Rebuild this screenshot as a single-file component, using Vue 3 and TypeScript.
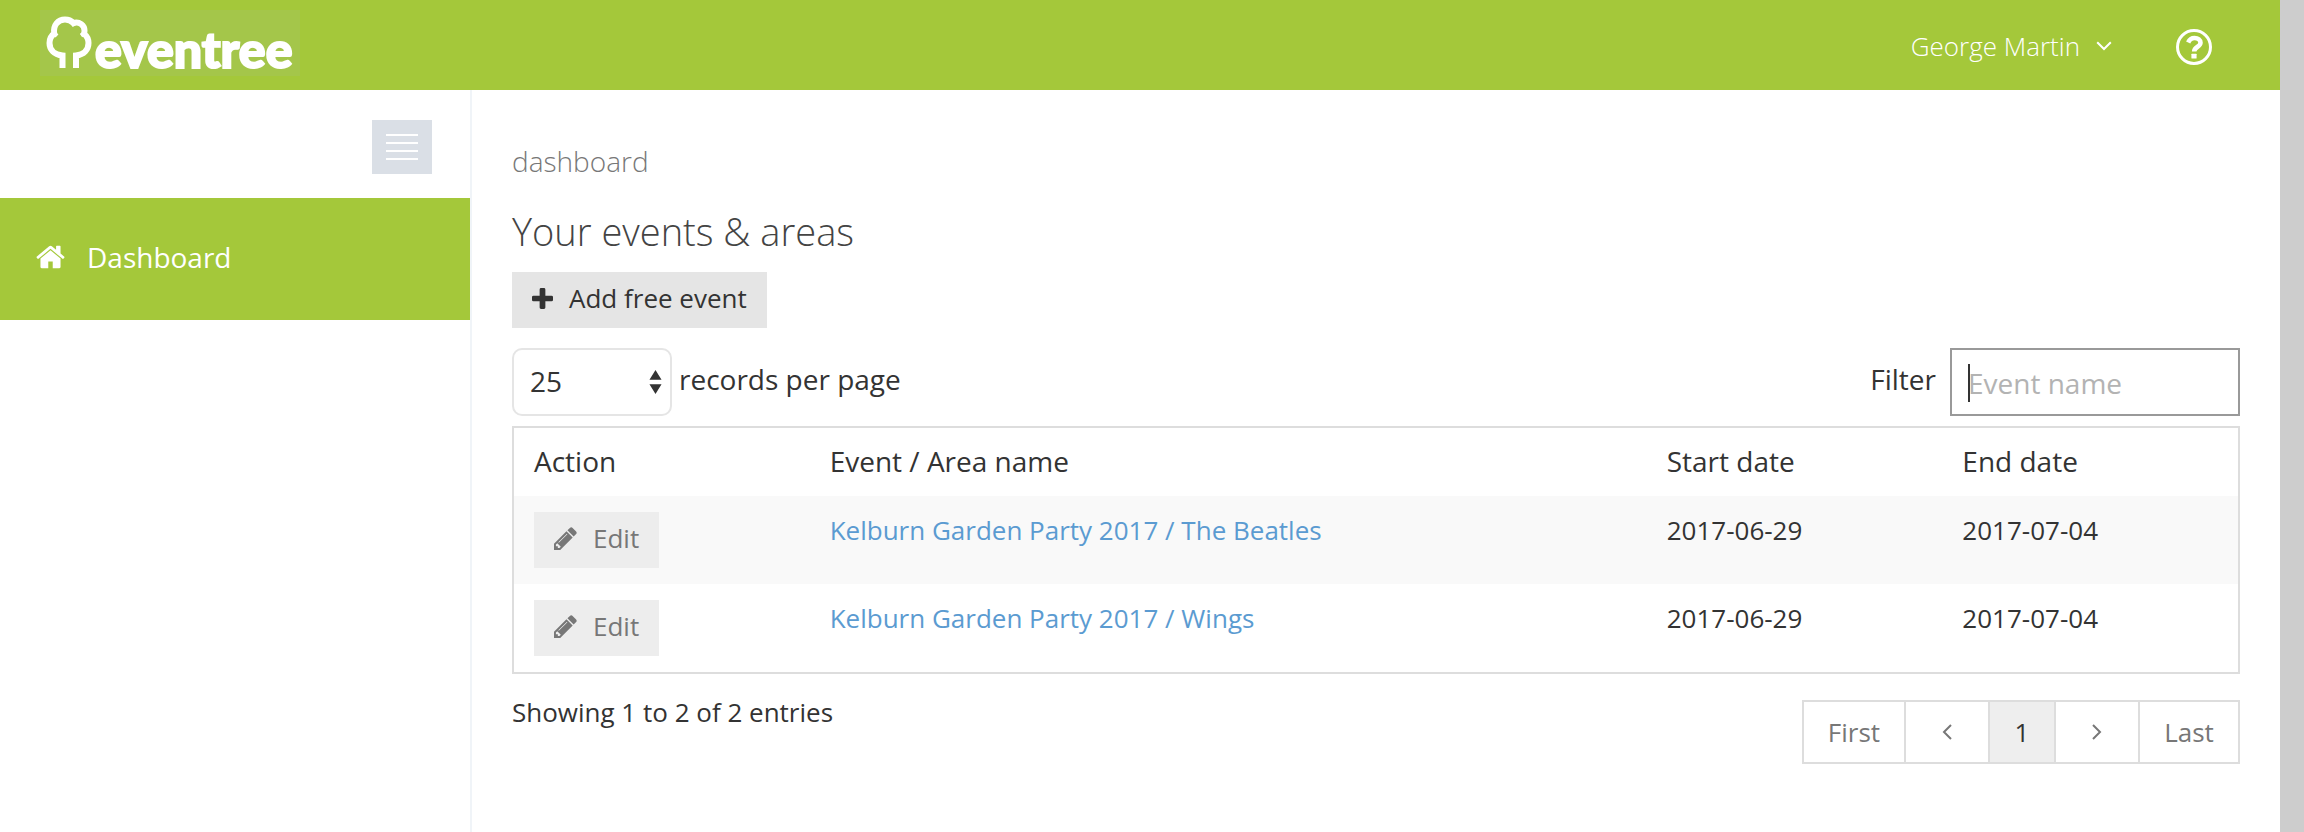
<script setup lang="ts">
import { ref, computed } from 'vue'

interface EventRow {
  name: string
  start: string
  end: string
}

const events: EventRow[] = [
  { name: 'Kelburn Garden Party 2017 / The Beatles', start: '2017-06-29', end: '2017-07-04' },
  { name: 'Kelburn Garden Party 2017 / Wings', start: '2017-06-29', end: '2017-07-04' },
]

const pageSize = ref('25')
const filter = ref('')

const visible = computed(() =>
  events.filter((e) => e.name.toLowerCase().includes(filter.value.toLowerCase())),
)
</script>

<template>
  <div class="shell">
    <div class="page">
      <header class="topbar">
        <a class="logo" href="#" aria-label="eventree">
          <svg class="tree" viewBox="0 0 48 54" aria-hidden="true">
            <path
              d="M17.500 53V40.500C8.500 39.500 4.500 34 4.500 28C4.500 23.500 6.500 20.500 9.200 18.500C8 10 13 4.500 20 4.500C24 4.500 26.500 6 28.300 8C34.500 6 39.500 10.500 39.500 15.500C39.500 17 39.300 18 39 18.800C42 21 43.500 24.500 43.500 28C43.500 34.500 39 39.500 31 40.500V53"
              fill="none"
              stroke="#fff"
              stroke-width="6"
            />
            <path d="M9 18l3 3M39 18.500l-3 2M28 8l1.500 3" stroke="#fff" stroke-width="4" />
          </svg>
          <span class="wordmark">eventree</span>
        </a>
        <div class="account">
          <button class="user" type="button">
            George Martin
            <svg class="caret" viewBox="0 0 16 10" aria-hidden="true">
              <path d="M1.200 1.200L8 8l6.800-6.800" fill="none" stroke="#fff" stroke-width="2" />
            </svg>
          </button>
          <button class="help" type="button" aria-label="Help">
            <svg viewBox="0 0 36 36" aria-hidden="true">
              <circle cx="18" cy="18" r="16.500" fill="none" stroke="#fff" stroke-width="3" />
              <path
                d="M12.200 13.500C13.500 10.500 15.500 9 18.500 9C22 9 24.500 11 24.500 13.800C24.500 18 18.300 17.500 18.200 22.500"
                fill="none"
                stroke="#fff"
                stroke-width="4.600"
              />
              <rect x="15.400" y="24.700" width="5.200" height="4.800" rx="0.600" fill="#fff" />
            </svg>
          </button>
        </div>
      </header>

      <div class="body">
        <nav class="sidebar">
          <div class="toggle-row">
            <button class="toggle" type="button" aria-label="Toggle sidebar">
              <span class="bar"></span><span class="bar"></span><span class="bar"></span><span class="bar"></span>
            </button>
          </div>
          <a class="nav-item" href="#">
            <svg class="home" viewBox="0 224 1664 1344" aria-hidden="true">
              <path
                fill="#fff"
                d="M1408 992v480q0 26-19 45t-45 19H960v-384H704v384H320q-26 0-45-19t-19-45V992q0-1 .5-3t.5-3l575-474 575 474q1 2 1 6zm223-69l-62 74q-8 9-21 11h-3q-13 0-21-7L832 424l-692 577q-12 8-24 7-13-2-21-11l-62-74q-8-10-7-23.500t11-21.500l719-599q32-26 76-26t76 26l244 204V288q0-14 9-23t23-9h192q14 0 23 9t9 23v408l219 182q10 8 11 21.500t-7 23.500z"
              />
            </svg>
            Dashboard
          </a>
        </nav>

        <main class="content">
          <div class="crumb">dashboard</div>
          <h1 class="title">Your events &amp; areas</h1>
          <button class="btn add" type="button">
            <svg class="plus" viewBox="0 0 22 22" aria-hidden="true">
              <path
                fill="#333"
                d="M9.500 0h3q1.500 0 1.500 1.500V8h6.500Q22 8 22 9.500v3q0 1.500-1.500 1.500H14v6.500q0 1.500-1.500 1.500h-3Q8 22 8 20.500V14H1.500Q0 14 0 12.500v-3Q0 8 1.500 8H8V1.500Q8 0 9.500 0z"
              />
            </svg>
            Add free event
          </button>

          <div class="toolbar">
            <div class="length">
              <div class="select-wrap">
                <select id="page-size" v-model="pageSize">
                  <option>10</option>
                  <option>25</option>
                  <option>50</option>
                </select>
                <svg class="arrows" viewBox="0 0 14 26" aria-hidden="true">
                  <path fill="#333" d="M7 0l6.500 10.500H.5zM7 26L.5 15.500h13z" />
                </svg>
              </div>
              <label class="label" for="page-size">records per page</label>
            </div>
            <div class="filter">
              <label class="label" for="filter">Filter</label>
              <div class="input-wrap">
                <input id="filter" v-model="filter" type="text" placeholder="Event name" />
                <span class="cursor" aria-hidden="true"></span>
              </div>
            </div>
          </div>

          <table class="grid">
            <colgroup>
              <col class="c-action" />
              <col />
              <col class="c-date" />
              <col class="c-date" />
            </colgroup>
            <thead>
              <tr>
                <th>Action</th>
                <th>Event / Area name</th>
                <th>Start date</th>
                <th>End date</th>
              </tr>
            </thead>
            <tbody>
              <tr v-for="row in visible" :key="row.name">
                <td>
                  <button class="btn edit" type="button">
                    <svg class="pencil" viewBox="128 128 1536 1536" aria-hidden="true">
                      <path
                        fill="#777"
                        d="M491 1536l91-91-235-235-91 91v107h128v128h107zm523-928q0-22-22-22-10 0-17 7l-542 542q-7 7-7 17 0 22 22 22 10 0 17-7l542-542q7-7 7-17zm-54-192l416 416-832 832H128v-416zm683 96q0 53-37 90l-166 166-416-416 166-165q36-38 90-38 53 0 91 38l235 234q37 39 37 91z"
                      />
                    </svg>
                    Edit
                  </button>
                </td>
                <td><a class="link" href="#">{{ row.name }}</a></td>
                <td>{{ row.start }}</td>
                <td>{{ row.end }}</td>
              </tr>
            </tbody>
          </table>

          <div class="footer">
            <div class="info">Showing 1 to {{ visible.length }} of {{ visible.length }} entries</div>
            <div class="pager">
              <button class="pg" type="button">First</button>
              <button class="pg arrow" type="button" aria-label="Previous page">
                <svg viewBox="0 0 10 16" aria-hidden="true">
                  <path d="M9 1L2 8l7 7" fill="none" stroke="#777" stroke-width="2" />
                </svg>
              </button>
              <button class="pg current" type="button" aria-current="page">1</button>
              <button class="pg arrow" type="button" aria-label="Next page">
                <svg viewBox="0 0 10 16" aria-hidden="true">
                  <path d="M1 1l7 7-7 7" fill="none" stroke="#777" stroke-width="2" />
                </svg>
              </button>
              <button class="pg" type="button">Last</button>
            </div>
          </div>
        </main>
      </div>
    </div>
    <div class="edge"></div>
  </div>
</template>

<style>
body {
  margin: 0;
  background: #fff;
}
</style>

<style scoped>
.shell {
  display: flex;
  min-height: 100vh;
  font-family: 'Open Sans', 'Noto Sans', sans-serif;
  font-size: 26px;
  line-height: 36px;
  color: #333;
}
.shell *,
.shell {
  box-sizing: border-box;
}
button,
input,
select {
  font: inherit;
  color: inherit;
  margin: 0;
  border: 0;
  padding: 0;
  background: none;
  border-radius: 0;
}
button {
  cursor: pointer;
}
a {
  text-decoration: none;
}
.page {
  flex: 1;
  min-width: 0;
  display: flex;
  flex-direction: column;
}
.edge {
  width: 24px;
  background: #cdcdcd;
}
.topbar {
  display: flex;
  justify-content: space-between;
  height: 90px;
  padding: 0 68px 0 40px;
  background: #a4c83a;
}
.logo {
  display: flex;
  gap: 2px;
  width: 260px;
  height: 66px;
  margin-top: 10px;
  padding: 5px;
  background: #a4c64a;
  color: #fff;
}
.tree {
  flex: none;
  width: 48px;
  height: 54px;
}
.wordmark {
  font-family: Lato, 'Open Sans', sans-serif;
  font-weight: 900;
  font-size: 50px;
  line-height: 68px;
  -webkit-text-stroke: 2px #fff;
}
.account {
  display: flex;
  align-items: center;
  gap: 64px;
}
.user {
  display: flex;
  align-items: center;
  gap: 16px;
  padding-top: 2px;
  font-size: 26px;
  font-weight: 300;
  color: #fff;
}
.caret {
  width: 16px;
  height: 10px;
}
.help {
  display: flex;
  padding-top: 4px;
}
.help svg {
  width: 36px;
  height: 36px;
}
.body {
  flex: 1;
  display: flex;
}
.sidebar {
  width: 472px;
  flex: none;
  border-right: 2px solid #f0f4f8;
}
.toggle-row {
  display: flex;
  justify-content: flex-end;
  padding: 30px 38px 24px 0;
}
.toggle {
  display: flex;
  flex-direction: column;
  align-items: center;
  justify-content: center;
  gap: 6px;
  width: 60px;
  height: 54px;
  background: #dadfe6;
}
.bar {
  width: 32px;
  height: 2px;
  background: #fff;
}
.nav-item {
  display: flex;
  align-items: center;
  gap: 22px;
  height: 122px;
  padding: 0 36px 4px;
  background: #a4c83a;
  color: #fff;
  font-size: 28px;
}
.home {
  width: 29px;
  height: 24px;
}
.content {
  flex: 1;
  min-width: 0;
  padding: 51px 40px 40px;
}
.crumb {
  font-size: 28px;
  font-weight: 300;
  line-height: 40px;
  color: #777;
}
.title {
  margin: 24px 0 15px;
  font-size: 38px;
  font-weight: 300;
  line-height: 52px;
  color: #444;
}
.btn {
  display: flex;
  align-items: center;
  height: 56px;
  padding: 0 20px 4px;
  background: #e5e5e5;
}
.add {
  gap: 16px;
}
.plus {
  width: 21px;
  height: 21px;
}
.toolbar {
  display: flex;
  justify-content: space-between;
  margin: 20px 0 10px;
  font-size: 28px;
}
.length,
.filter {
  display: flex;
  align-items: center;
}
.length {
  gap: 7px;
}
.filter {
  gap: 14px;
}
.label {
  padding-bottom: 6px;
}
.select-wrap,
.input-wrap {
  position: relative;
}
select {
  appearance: none;
  display: block;
  width: 160px;
  height: 68px;
  padding: 0 40px 2px 16px;
  border: 2px solid #e5e5e5;
  border-radius: 10px;
}
.arrows {
  position: absolute;
  right: 10px;
  top: 21px;
  width: 13px;
  height: 26px;
  pointer-events: none;
}
input {
  display: block;
  width: 290px;
  height: 68px;
  padding: 2px 16px 0;
  border: 2px solid #999;
}
input::placeholder {
  color: #b3b3b3;
  opacity: 1;
}
.cursor {
  position: absolute;
  left: 18px;
  top: 16px;
  width: 2px;
  height: 38px;
  background: #333;
}
.grid {
  width: 100%;
  table-layout: fixed;
  border-collapse: separate;
  border-spacing: 0;
  border: 2px solid #ddd;
}
.c-action,
.c-date {
  width: 17.15%;
}
th {
  padding: 15px 20px 17px;
  font-size: 28px;
  font-weight: 400;
  text-align: left;
}
td {
  padding: 16px 20px;
  vertical-align: top;
}
tbody tr:nth-child(odd) {
  background: #f9f9f9;
}
.edit {
  gap: 16px;
  background: #ededed;
  color: #777;
}
.pencil {
  width: 23px;
  height: 23px;
}
.link {
  color: #5b9bd1;
}
.footer {
  display: flex;
  justify-content: space-between;
  align-items: flex-start;
  padding-top: 20px;
}
.pager {
  display: flex;
  margin-top: 6px;
  border: 2px solid #ddd;
}
.pg {
  display: flex;
  align-items: center;
  justify-content: center;
  min-width: 100px;
  height: 60px;
  color: #777;
}
.pg + .pg {
  border-left: 2px solid #ddd;
}
.pg.arrow {
  min-width: 84px;
}
.arrow svg {
  width: 10px;
  height: 16px;
}
.pg.current {
  min-width: 66px;
  background: #eee;
  color: #333;
}
</style>
